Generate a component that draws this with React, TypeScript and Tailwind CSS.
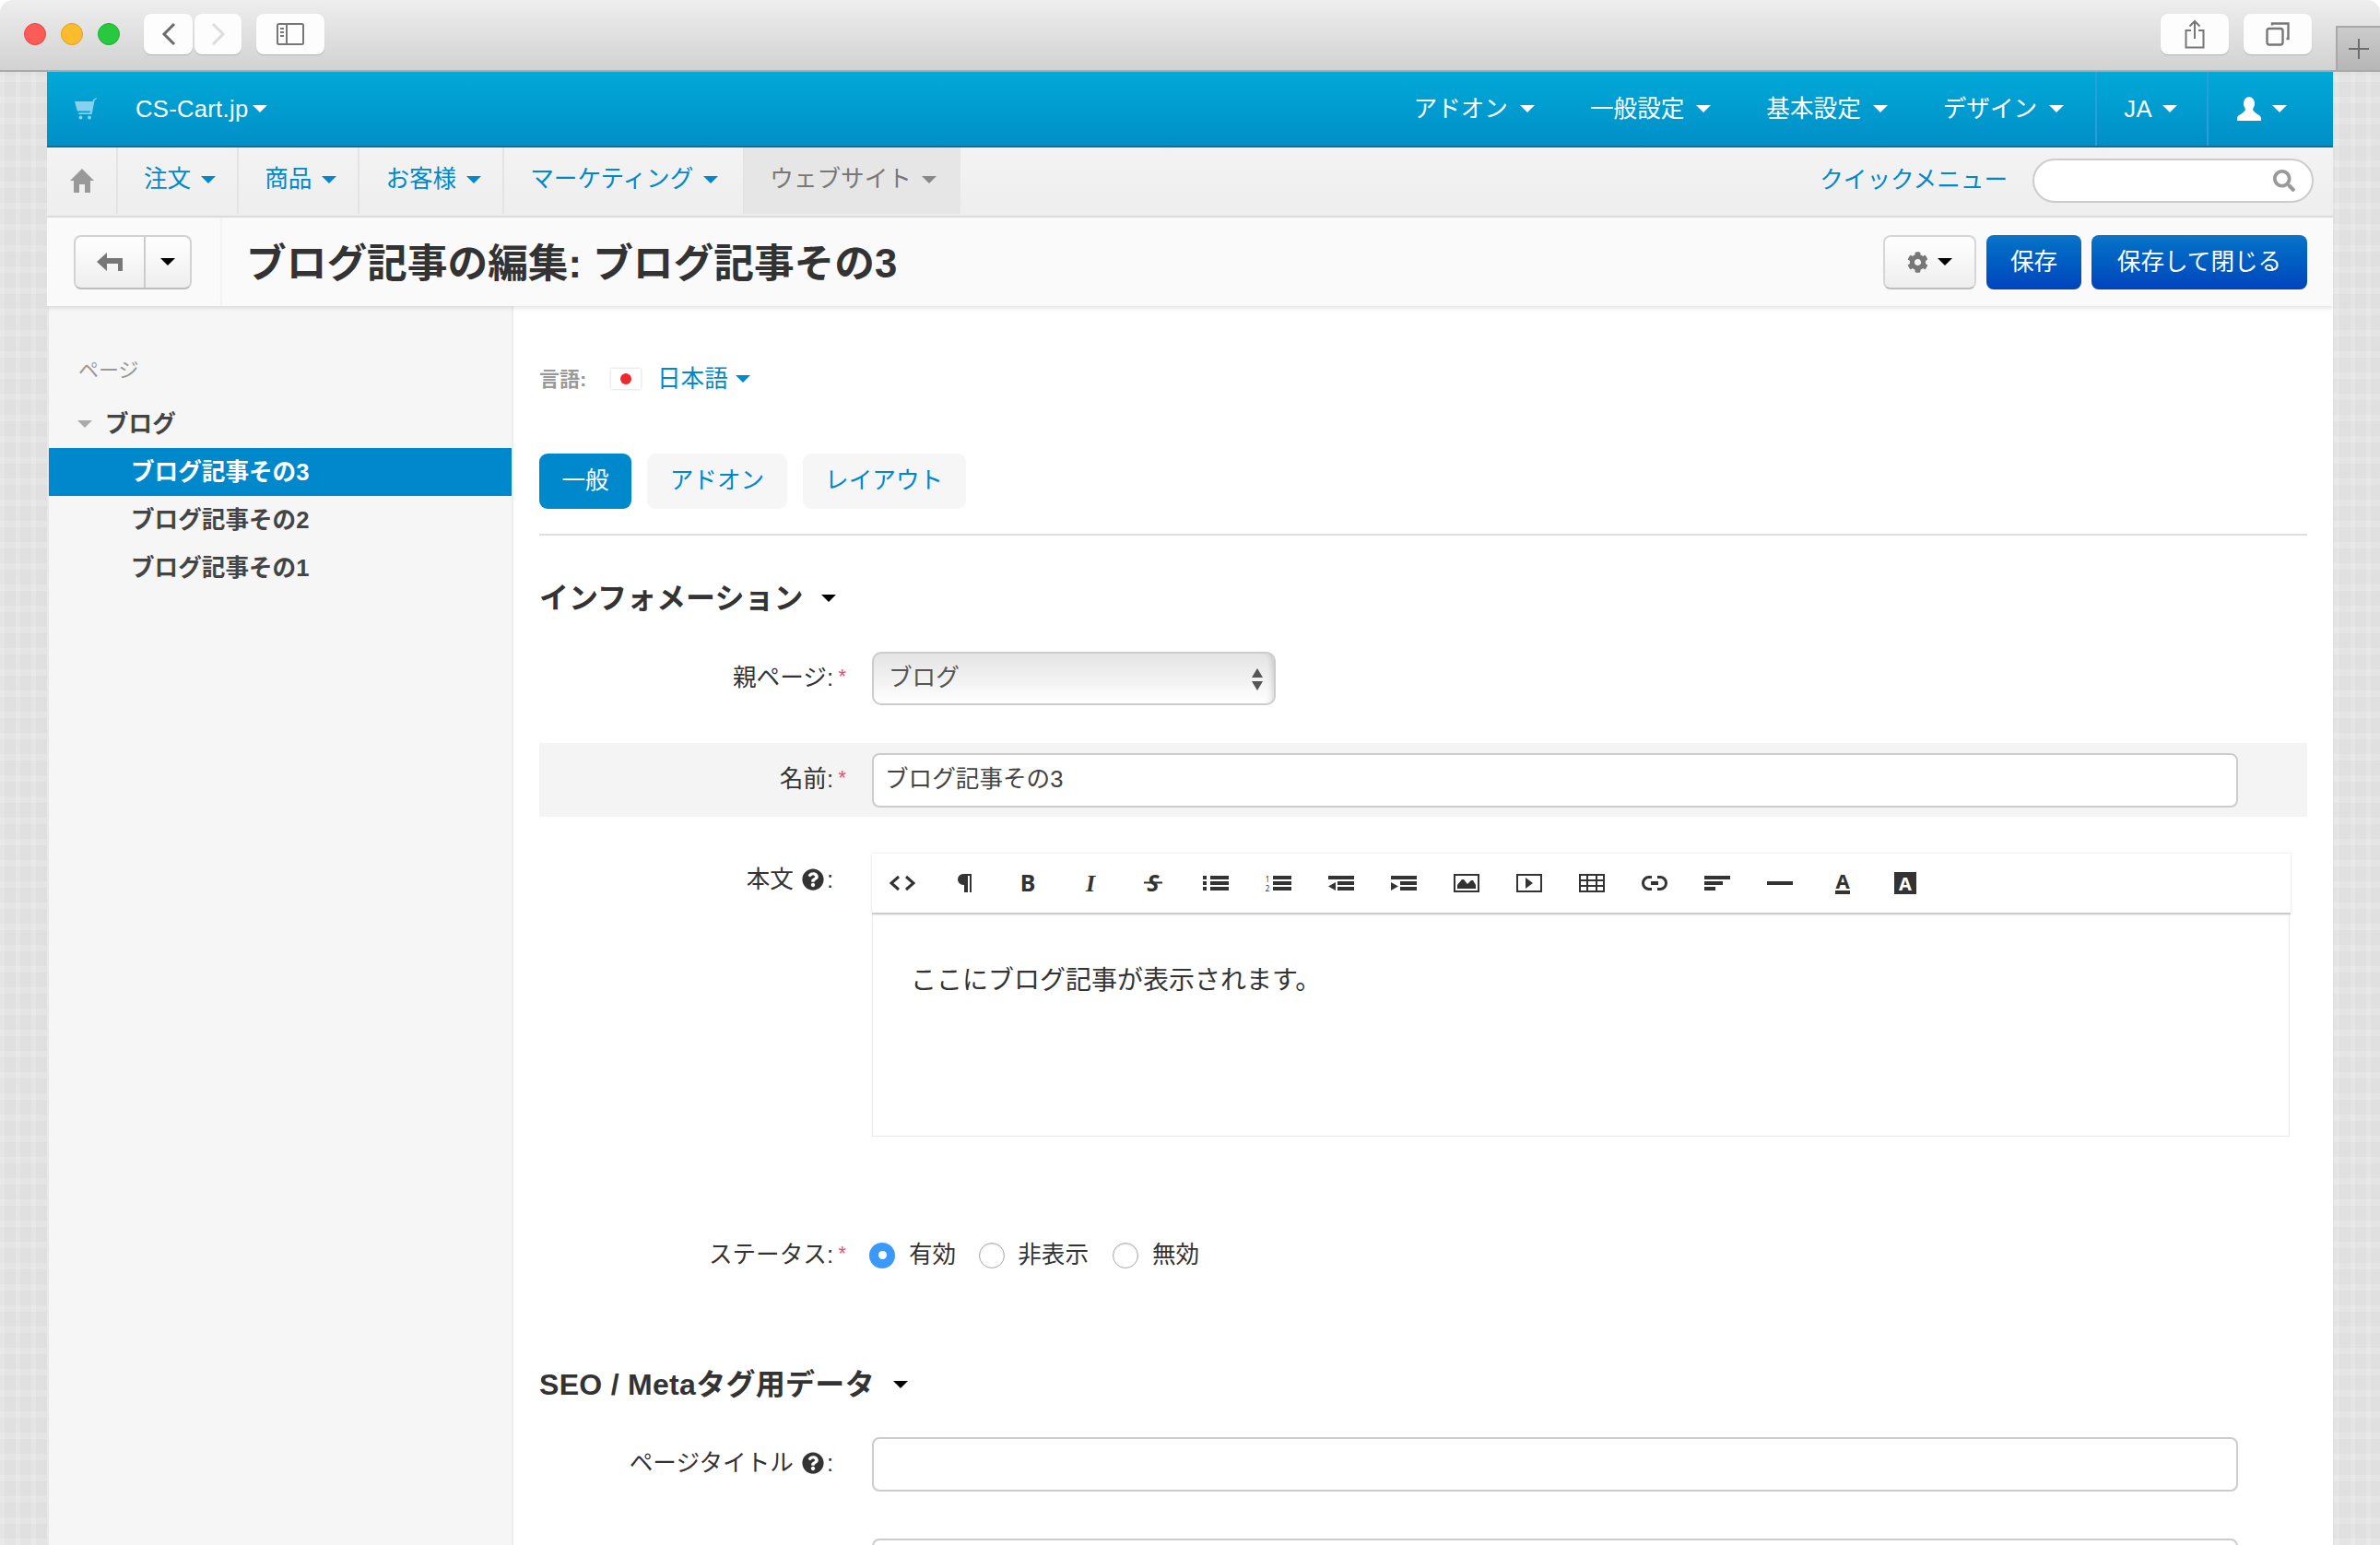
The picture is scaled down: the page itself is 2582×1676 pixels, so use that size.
import type { ReactNode } from "react";
import { FaCog, FaQuestionCircle, FaSearch } from "react-icons/fa";

const Caret = ({ className = "border-t-white" }: { className?: string }) => (
  <span className={`inline-block h-0 w-0 shrink-0 border-x-[8px] border-t-[8px] border-x-transparent ${className}`} />
);

const MacButton = ({ children, className = "" }: { children: ReactNode; className?: string }) => (
  <div className={`flex h-[44px] items-center justify-center rounded-[8px] bg-[#fdfdfd] shadow-[0_1px_1px_rgba(0,0,0,0.18)] ${className}`}>
    {children}
  </div>
);

const TitleBar = () => (
  <div className="flex h-[78px] shrink-0 rounded-t-[14px] border-b-2 border-[#a9a9a9] bg-gradient-to-b from-[#eeeeee] to-[#d2d2d2]">
    <div className="flex items-center gap-[16px] pl-[26px] pb-[2px]">
      <span className="h-[24px] w-[24px] rounded-full border border-[#e5483f] bg-[#fc5b57]" />
      <span className="h-[24px] w-[24px] rounded-full border border-[#dfa022] bg-[#fdbc2e]" />
      <span className="h-[24px] w-[24px] rounded-full border border-[#1fae36] bg-[#28c93f]" />
    </div>
    <div className="ml-[26px] flex items-center gap-[2px] pb-[2px]">
      <MacButton className="w-[53px]">
        <svg width="16" height="26" viewBox="0 0 16 26" fill="none" stroke="#6b6b6b" strokeWidth="3"><path d="M14 2 3 13l11 11" /></svg>
      </MacButton>
      <MacButton className="w-[51px]">
        <svg width="16" height="26" viewBox="0 0 16 26" fill="none" stroke="#dcdcdc" strokeWidth="3"><path d="M2 2l11 11L2 24" /></svg>
      </MacButton>
    </div>
    <div className="ml-[16px] flex items-center pb-[2px]">
      <MacButton className="w-[74px]">
        <svg width="30" height="24" viewBox="0 0 30 24" fill="none" stroke="#777777" strokeWidth="2">
          <rect x="1" y="1" width="28" height="22" rx="1.5" />
          <path d="M11 1v22" />
          <path d="M4 6h4M4 10h4M4 14h4" />
        </svg>
      </MacButton>
    </div>
    <div className="ml-auto flex items-center gap-[16px] pb-[2px]">
      <MacButton className="w-[74px]">
        <svg width="24" height="32" viewBox="0 0 24 32" fill="none" stroke="#777777" strokeWidth="2">
          <path d="M8 12H2.5v18.5h19V12H16" />
          <path d="M12 21V2M6.5 7.5 12 2l5.5 5.5" />
        </svg>
      </MacButton>
      <MacButton className="w-[74px]">
        <svg width="26" height="26" viewBox="0 0 26 26" fill="none" stroke="#777777" strokeWidth="2.4">
          <rect x="1.5" y="7" width="17" height="17.5" rx="2.5" />
          <path d="M7 3.5V1.5h17.5V18h-2" />
        </svg>
      </MacButton>
    </div>
    <div className="ml-[26px] flex h-[48px] w-[48px] items-center justify-center self-end border-l-2 border-t-2 border-[#a8a8a8] bg-gradient-to-b from-[#cbcbcb] to-[#b6b6b6] text-[#6d6d6d]">
      <svg width="22" height="22" viewBox="0 0 22 22" stroke="currentColor" strokeWidth="2"><path d="M11 0v22M0 11h22" /></svg>
    </div>
  </div>
);

const topItems = ["アドオン", "一般設定", "基本設定", "デザイン"];

const TopBar = () => (
  <div className="flex h-[82px] shrink-0 items-center border-b-2 border-[#00729f] bg-gradient-to-b from-[#00a9d8] to-[#008fc7] text-[25.6px] text-white">
    <svg className="ml-[30px]" width="24" height="24" viewBox="0 0 24 24" fill="#84d2ee">
      <path d="M0 4h19.500l.7-2L23.500 0l.5 1-2.300 1.800L18.600 18H4.500L4 16.200h12.500l.3-1.700H2.800z" />
      <circle cx="6.500" cy="21.500" r="2" />
      <circle cx="16" cy="21.500" r="2" />
    </svg>
    <span className="ml-[42px] tracking-[0.3px]">CS-Cart.jp</span>
    <span className="ml-[5px] flex"><Caret /></span>
    <div className="ml-auto flex h-full items-center">
      {topItems.map((t) => (
        <div key={t} className="ml-[60px] flex items-center gap-[13px] first:ml-0">
          <span>{t}</span>
          <Caret />
        </div>
      ))}
      <div className="ml-[34px] flex h-full items-center gap-[11px] border-x-2 border-[#2a9de0] pl-[29px] pr-[32px]">
        <span className="tracking-[0.5px]">JA</span>
        <Caret />
      </div>
      <div className="flex h-full items-center gap-[12px] pl-[31px] pr-[50px]">
        <svg width="26" height="26" viewBox="0 0 26 26" fill="#ffffff">
          <ellipse cx="13" cy="7.500" rx="6" ry="7.500" />
          <path d="M9 13c0 5-9 6-9 10v3h26v-3c0-4-9-5-9-10z" />
        </svg>
        <Caret />
      </div>
    </div>
  </div>
);

const subItems = [
  { label: "注文", pad: "pr-[23px]" },
  { label: "商品", pad: "pr-[23px]" },
  { label: "お客様", pad: "pr-[23px]" },
  { label: "マーケティング", pad: "pr-[27px]" },
];

const SubBar = () => (
  <div className="flex h-[76px] shrink-0 items-stretch border-b-2 border-[#dedede] bg-gradient-to-b from-[#f3f3f3] to-[#eeeeee] text-[25.6px] text-[#0088cc]">
    <div className="mb-[2px] flex w-[77px] items-center justify-center border-r-2 border-[#e4e4e4]">
      <svg width="26" height="26" viewBox="0 0 26 26" fill="#999999"><path d="M13 0l13 13h-4v13h-6v-9h-6v9H4V13H0z" /></svg>
    </div>
    {subItems.map((t) => (
      <div key={t.label} className={`mb-[2px] flex items-center gap-[11px] border-r-2 border-[#e4e4e4] pb-[3px] pl-[28px] ${t.pad}`}>
        <span>{t.label}</span>
        <Caret className="border-t-[#0088cc]" />
      </div>
    ))}
    <div className="mb-[2px] flex items-center gap-[11px] bg-[#e6e6e6] pb-[3px] pl-[27px] pr-[26px] text-[#777777]">
      <span>ウェブサイト</span>
      <Caret className="border-t-[#888888]" />
    </div>
    <div className="ml-auto flex items-center pb-[2px] pr-[21px]">
      <span className="pb-[2px]">クイックメニュー</span>
      <div className="ml-[27px] flex h-[48px] w-[305px] items-center justify-end rounded-full border-2 border-[#cccccc] bg-white pr-[18px] text-[#999999]">
        <FaSearch size={24} />
      </div>
    </div>
  </div>
);

const ActionBar = () => (
  <div className="relative z-10 flex h-[96px] shrink-0 items-center bg-[#fafafa] pl-[29px] pr-[28px] shadow-[0_2px_5px_rgba(0,0,0,0.12)]">
    <div className="flex h-[59px] w-[128px] rounded-[8px] border-2 border-[#d2d2d2] border-b-[#bdbdbd] bg-gradient-to-b from-[#ffffff] to-[#eeeeee]">
      <div className="flex w-[76px] items-center justify-center border-r-2 border-[#cccccc]">
        <svg width="28" height="20" viewBox="0 0 28 20" fill="#777777"><path d="M0 10 11 0v6h17v14h-5v-8H11v8z" /></svg>
      </div>
      <div className="flex flex-1 items-center justify-center"><Caret className="border-t-black" /></div>
    </div>
    <div className="ml-[31px] h-full w-[2px] bg-[#f4f4f4]" />
    <h1 className="ml-[26px] pt-[3px] text-[43.7px] font-bold leading-none text-[#333333]">ブログ記事の編集: ブログ記事その3</h1>
    <div className="ml-auto flex h-[59px] gap-[11px] text-[25.6px] text-white">
      <div className="flex w-[101px] items-center justify-center gap-[10px] rounded-[8px] border-2 border-[#d6d6d6] border-b-[#bdbdbd] bg-gradient-to-b from-[#ffffff] to-[#eeeeee] text-[#777777]">
        <FaCog size={23} />
        <Caret className="border-t-black" />
      </div>
      <div className="flex w-[103px] items-center justify-center rounded-[8px] bg-gradient-to-b from-[#0c74c8] to-[#0043bc]">保存</div>
      <div className="flex w-[234px] items-center justify-center rounded-[8px] bg-gradient-to-b from-[#0c74c8] to-[#0043bc]">保存して閉じる</div>
    </div>
  </div>
);

const Sidebar = () => (
  <div className="flex w-[506px] shrink-0 flex-col border-l-2 border-r-2 border-l-[#e8e8e8] border-r-[#eeeeee] bg-[#f6f6f6] pt-[55px]">
    <div className="pl-[32px] text-[22px] leading-[30px] text-[#999999]">ページ</div>
    <div className="mt-[17px] flex h-[52px] items-center pl-[31px] text-[25.6px] font-bold text-[#444444]">
      <Caret className="border-t-[#aaaaaa]" />
      <span className="ml-[14px]">ブログ</span>
    </div>
    <div className="flex h-[52px] items-center bg-[#0088cd] pl-[89px] text-[25.6px] font-bold text-white">ブログ記事その3</div>
    <div className="flex h-[52px] items-center pl-[89px] text-[25.6px] font-bold text-[#444444]">ブログ記事その2</div>
    <div className="flex h-[52px] items-center pl-[89px] text-[25.6px] font-bold text-[#444444]">ブログ記事その1</div>
  </div>
);

const Label = ({ children, required }: { children: ReactNode; required?: boolean }) => (
  <div className="flex w-[361px] shrink-0 items-center justify-end pb-[2px] pr-[42px] text-[25.6px] text-[#333333]">
    <span className="relative flex items-center">
      {children}
      {required && <span className="absolute -right-[14px] top-[3px] text-[22px] leading-[30px] text-[#f44a6e]">*</span>}
    </span>
  </div>
);

const Help = () => <FaQuestionCircle size={24} className="ml-[9px] mr-[3px] text-[#333333]" />;

const Radio = ({ checked }: { checked?: boolean }) =>
  checked ? (
    <span className="flex h-[28px] w-[28px] shrink-0 items-center justify-center rounded-full bg-[#3b99fc]">
      <span className="h-[9px] w-[9px] rounded-full bg-white" />
    </span>
  ) : (
    <span className="block h-[28px] w-[28px] shrink-0 rounded-full border border-[#aaaaaa] bg-white shadow-[inset_0_1px_2px_rgba(0,0,0,0.12)]" />
  );

const Bars = ({ rows }: { rows: [number, number, number][] }) => (
  <>
    {rows.map(([x, y, w]) => (
      <rect key={`${x}-${y}`} x={x} y={y} width={w} height="4" />
    ))}
  </>
);

const editorIcons: ReactNode[] = [
  <path d="M10 5l-8 7 8 7M18 5l8 7-8 7" fill="none" stroke="#333333" strokeWidth="3" />,
  <path d="M21 2h-9a6 6 0 0 0 0 12h1v8h4V4h2v18h2z" />,
  <text x="14" y="21" textAnchor="middle" fontSize="25" fontWeight="700" fontFamily="Noto Sans">B</text>,
  <text x="14" y="21" textAnchor="middle" fontSize="26" fontWeight="700" fontStyle="italic" fontFamily="Liberation Serif">I</text>,
  <>
    <text x="14" y="21" textAnchor="middle" fontSize="25" fontWeight="700" fontStyle="italic" fontFamily="Noto Sans">S</text>
    <rect x="4" y="10.500" width="20" height="2" />
  </>,
  <>
    <Bars rows={[[8, 4, 20], [8, 10, 20], [8, 16, 20]]} />
    <rect x="0" y="4" width="4" height="4" />
    <rect x="0" y="10" width="4" height="4" />
    <rect x="0" y="16" width="4" height="4" />
  </>,
  <>
    <Bars rows={[[8, 4, 20], [8, 10, 20], [8, 16, 20]]} />
    <text x="2" y="10.500" textAnchor="middle" fontSize="8" fontFamily="Noto Sans">1</text>
    <text x="2" y="20.500" textAnchor="middle" fontSize="8" fontFamily="Noto Sans">2</text>
  </>,
  <>
    <Bars rows={[[0, 4, 28], [10, 10, 18], [10, 16, 18]]} />
    <path d="M0 15.500l8-4.500v9z" />
  </>,
  <>
    <Bars rows={[[0, 4, 28], [10, 10, 18], [10, 16, 18]]} />
    <path d="M8 15.500l-8-4.500v9z" />
  </>,
  <>
    <rect x="1" y="3" width="26" height="18" fill="none" stroke="#333333" strokeWidth="2" />
    <path d="M4 18v-4l5-6h2l4 5 4-4h2l3 5v4z" />
  </>,
  <>
    <rect x="1" y="3" width="26" height="18" fill="none" stroke="#333333" strokeWidth="2" />
    <path d="M10 6l8 6-8 6z" />
  </>,
  <path d="M1 3h26v18H1zM1 9h26M1 15h26M9 3v18M19 3v18" fill="none" stroke="#333333" strokeWidth="2" />,
  <>
    <path d="M11 5.500H8a6.500 6.500 0 0 0 0 13h3M17 5.500h3a6.500 6.500 0 0 1 0 13h-3" fill="none" stroke="#333333" strokeWidth="3" />
    <rect x="10" y="10" width="8" height="4" />
  </>,
  <Bars rows={[[0, 4, 28], [0, 10, 20], [0, 16, 12]]} />,
  <rect x="0" y="10" width="28" height="4" />,
  <>
    <text x="14" y="18" textAnchor="middle" fontSize="22" fontWeight="700" fontFamily="Noto Sans">A</text>
    <rect x="6" y="20" width="16" height="4" />
  </>,
  <>
    <rect x="2" y="0" width="24" height="24" />
    <text x="14" y="19.500" textAnchor="middle" fontSize="20" fontWeight="700" fontFamily="Noto Sans" fill="#ffffff">A</text>
  </>,
];

const Editor = () => (
  <div className="flex-1 pr-[18px]">
    <div className="flex h-[66px] w-[1539px] items-center gap-[40px] border-b-2 border-[#cccccc] bg-white pl-[19px] shadow-[0_0_3px_rgba(0,0,0,0.14)]">
      {editorIcons.map((icon, i) => (
        <svg key={i} width="28" height="24" viewBox="0 0 28 24" fill="#333333" className="shrink-0 overflow-visible">
          {icon}
        </svg>
      ))}
    </div>
    <div className="h-[241px] w-[1538px] border border-t-0 border-[#e8e8e8] pl-[41px] pt-[52px] text-[28px] leading-[40px] text-[#333333]">
      ここにブログ記事が表示されます。
    </div>
  </div>
);

const TextBox = ({ value }: { value?: string }) => (
  <div className="flex h-[59px] w-[1482px] items-center rounded-[8px] border-2 border-[#cccccc] bg-white pb-[2px] pl-[12px] text-[25.6px] text-[#444444]">
    {value}
  </div>
);

const SectionHeading = ({ children }: { children: ReactNode }) => (
  <div className="flex h-[40px] items-center gap-[20px] text-[32px] font-bold text-[#333333]">
    <span>{children}</span>
    <Caret className="border-t-black" />
  </div>
);

const Content = () => (
  <div className="min-w-0 flex-1 overflow-hidden bg-white pl-[28px] pr-[28px] pt-[64px]">
    <div className="flex h-[30px] items-center">
      <span className="w-[78px] text-[22px] font-bold text-[#999999]">言語:</span>
      <span className="flex h-[22px] w-[32px] items-center justify-center bg-white shadow-[0_0_3px_rgba(0,0,0,0.2)]">
        <span className="h-[12px] w-[12px] rounded-full bg-[#f0282d]" />
      </span>
      <span className="ml-[18px] text-[25.6px] text-[#0088cc]">日本語</span>
      <span className="ml-[8px] flex"><Caret className="border-t-[#0088cc]" /></span>
    </div>

    <div className="mt-[66px] flex h-[60px] gap-[17px] text-[25.6px] text-[#0088cc]">
      <div className="flex items-center rounded-[9px] bg-[#0088cd] px-[24.5px] pb-[2px] text-white">一般</div>
      <div className="flex items-center rounded-[9px] bg-[#f6f6f6] px-[24.5px] pb-[2px]">アドオン</div>
      <div className="flex items-center rounded-[9px] bg-[#f6f6f6] px-[24.5px] pb-[2px]">レイアウト</div>
    </div>
    <div className="mt-[27px] h-[2px] bg-[#dddddd]" />

    <div className="mt-[48px]"><SectionHeading>インフォメーション</SectionHeading></div>

    <div className="mt-[38px] flex h-[58px]">
      <Label required>親ページ:</Label>
      <div className="relative flex w-[438px] items-center rounded-[10px] border-2 border-[#cccccc] bg-gradient-to-b from-[#e4e4e4] to-[#ffffff] pb-[2px] pl-[16px] text-[25.6px] text-[#555555] shadow-[inset_-8px_0_6px_-6px_rgba(0,0,0,0.14)]">
        ブログ
        <span className="absolute right-[12px] top-[16px] flex flex-col gap-[4px]">
          <span className="h-0 w-0 border-x-[6px] border-b-[10px] border-x-transparent border-b-[#555555]" />
          <span className="h-0 w-0 border-x-[6px] border-t-[10px] border-x-transparent border-t-[#555555]" />
        </span>
      </div>
    </div>

    <div className="mt-[41px] flex h-[80px] items-center bg-[#f4f4f4]">
      <Label required>名前:</Label>
      <TextBox value="ブログ記事その3" />
    </div>

    <div className="mt-[40px] flex">
      <div className="flex h-[58px] items-center">
        <Label>本文 <Help />:</Label>
      </div>
      <Editor />
    </div>

    <div className="mt-[114px] flex h-[30px] items-center">
      <Label required>ステータス:</Label>
      <div className="-ml-[3px] flex items-center pb-[1px] text-[25.6px] text-[#333333]">
        <Radio checked />
        <span className="ml-[15px]">有効</span>
        <span className="ml-[25px] flex"><Radio /></span>
        <span className="ml-[14px]">非表示</span>
        <span className="ml-[26px] flex"><Radio /></span>
        <span className="ml-[15px]">無効</span>
      </div>
    </div>

    <div className="mt-[105px]"><SectionHeading><span className="tracking-[0.3px]">SEO / Metaタグ用データ</span></SectionHeading></div>

    <div className="mt-[37px] flex h-[59px]">
      <Label>ページタイトル <Help />:</Label>
      <TextBox />
    </div>
    <div className="mt-[51px] flex h-[59px]">
      <div className="w-[361px] shrink-0" />
      <TextBox />
    </div>
  </div>
);

export default function App() {
  return (
    <div className="flex h-[1676px] w-[2582px] flex-col overflow-hidden bg-white font-['Liberation_Sans','Noto_Sans_CJK_JP',sans-serif]">
      <TitleBar />
      <div className="flex min-h-0 flex-1 bg-[#e5e5e5] bg-[image:repeating-linear-gradient(90deg,rgba(255,255,255,0.08)_0,rgba(255,255,255,0.08)_5px,rgba(0,0,0,0.01)_5px,rgba(0,0,0,0.01)_17px),repeating-linear-gradient(0deg,rgba(255,255,255,0.08)_0,rgba(255,255,255,0.08)_7px,rgba(0,0,0,0.01)_7px,rgba(0,0,0,0.01)_23px)] px-[51px]">
        <div className="flex min-w-0 flex-1 flex-col overflow-hidden">
          <TopBar />
          <SubBar />
          <ActionBar />
          <div className="flex min-h-0 flex-1">
            <Sidebar />
            <Content />
          </div>
        </div>
      </div>
    </div>
  );
}
